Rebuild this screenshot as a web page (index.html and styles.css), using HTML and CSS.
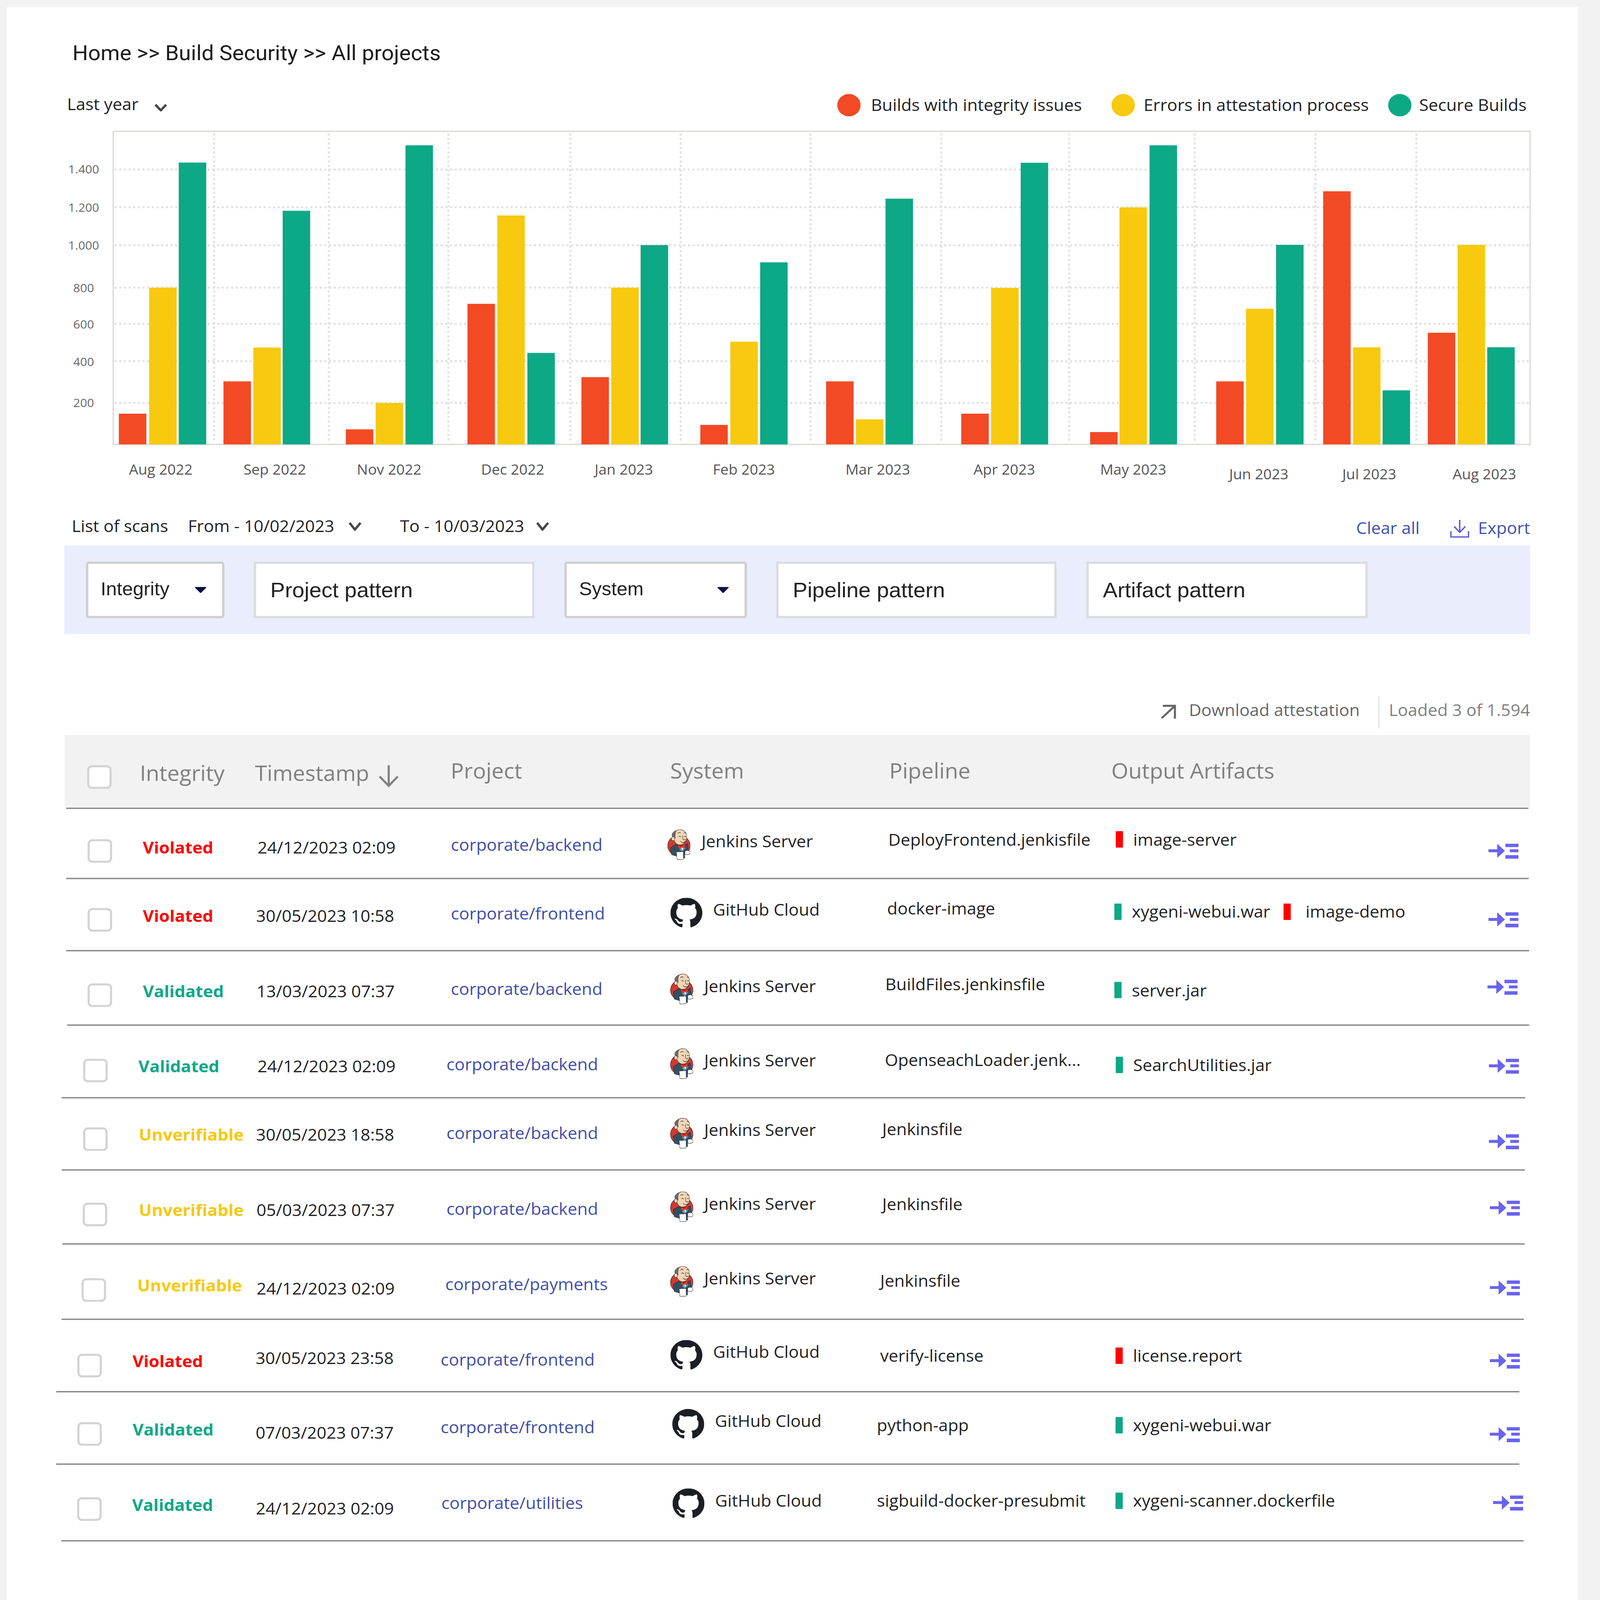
FILE: index.html
```html
<!DOCTYPE html>
<html lang="en">
<head>
<meta charset="utf-8">
<title>All projects</title>
<link rel="stylesheet" href="styles.css">
</head>
<body>
<svg class="defs" aria-hidden="true">
  <symbol id="jenkins" viewBox="0 0 296 305" preserveAspectRatio="none">
    <ellipse cx="148" cy="163" rx="145" ry="103" fill="#d33833" stroke="#231f20" stroke-width="5"/>
    <path d="M38 183 L108 150 L150 165 L225 160 L258 143 L268 208 L222 222 L223 288 L118 268 L53 253 Z" fill="#335061" stroke="#231f20" stroke-width="4"/>
    <path d="M153 198 L180 176 L236 184 L196 216 L195 230 Z" fill="#6d9fba"/>
    <path d="M178 182 L205 182 L196 212 Z" fill="#fff"/>
    <path d="M136 155 L176 170 L226 152 L222 186 L182 182 L142 190 Z" fill="#ef3b2c" stroke="#8a1c15" stroke-width="3"/>
    <path d="M70 70 C80 24 120 2 160 2 C210 2 245 30 248 70 C250 110 215 156 160 156 C115 156 85 130 70 70 Z" fill="#f0d6b5" stroke="#231f20" stroke-width="4"/>
    <path d="M58 50 C68 30 90 16 118 10 C100 28 96 60 103 88 L62 72 Z" fill="#6d6b6d" stroke="#231f20" stroke-width="3"/>
    <circle cx="73" cy="93" r="21" fill="#f0d6b5" stroke="#231f20" stroke-width="4"/>
    <path d="M146 72 Q160 62 176 78 M216 72 Q230 64 240 76 M200 60 Q190 95 208 104 Q225 108 232 96 M164 118 Q190 145 238 118 M132 40 Q148 24 170 36 M212 36 Q226 28 240 42" fill="none" stroke="#231f20" stroke-width="5"/>
    <path d="M115 226 L203 222 L206 300 L125 303 Z" fill="#fff" stroke="#231f20" stroke-width="4"/>
    <path d="M225 218 C250 205 290 208 293 232 C293 252 262 258 225 250 Z" fill="#fff" stroke="#231f20" stroke-width="4"/>
  </symbol>
  <symbol id="github" viewBox="0 0 16 16" preserveAspectRatio="none">
    <path fill="#1b1f23" d="M8 0C3.58 0 0 3.58 0 8c0 3.54 2.29 6.53 5.47 7.59.4.07.55-.17.55-.38 0-.19-.01-.82-.01-1.49-2.01.37-2.53-.49-2.69-.94-.09-.23-.48-.94-.82-1.13-.28-.15-.68-.52-.01-.53.63-.01 1.08.58 1.23.82.72 1.21 1.87.87 2.33.66.07-.52.28-.87.51-1.07-1.78-.2-3.64-.89-3.64-3.95 0-.87.31-1.59.82-2.15-.08-.2-.36-1.02.08-2.12 0 0 .67-.21 2.2.82.64-.18 1.32-.27 2-.27.68 0 1.36.09 2 .27 1.53-1.04 2.2-.82 2.2-.82.44 1.1.16 1.92.08 2.12.51.56.82 1.27.82 2.15 0 3.07-1.87 3.75-3.65 3.95.29.25.54.73.54 1.48 0 1.07-.01 1.93-.01 2.2 0 .21.15.46.55.38A8.013 8.013 0 0016 8c0-4.42-3.58-8-8-8z"/>
  </symbol>
  <symbol id="expand" viewBox="0 0 131 71">
    <path fill="#6a63ee" d="M0 29H38V4L71 36L38 67V42H0Z M73 4H129V19H73Z M92 29H129V42H92Z M73 55H129V71H73Z"/>
  </symbol>
</svg>

<main class="panel">
  <h1 class="crumb">Home &gt;&gt; Build Security &gt;&gt; All projects</h1>

  <section class="chart-top">
    <span class="period">Last year</span>
    <svg class="chev chev-period" viewBox="0 0 54 34"><path d="M4 4L27 29L50 4"/></svg>
    <ul class="legend">
      <li class="legend-item item-a"><i class="dot dot-r"></i>Builds with integrity issues</li>
      <li class="legend-item item-b"><i class="dot dot-y"></i>Errors in attestation process</li>
      <li class="legend-item item-c"><i class="dot dot-g"></i>Secure Builds</li>
    </ul>
  </section>

  <svg class="chart" viewBox="276 560 6300 1600" role="img" aria-label="Builds per month">
    <g class="grid">
      <path d="M496 756H6560M496 924H6560M496 1094H6560M496 1283H6560M496 1444H6560M496 1611H6560M496 1797H6560"/>
      <path d="M919 600V1975M1411 600V1975M1924 600V1975M2447 600V1975M2921 600V1975M3478 600V1975M4039 600V1975M4588 600V1975M5127 600V1975M5645 600V1975M6078 600V1975"/>
    </g>
    <path class="frame" d="M486 1982V586H6566V1982Z"/>
    <g class="bars-r">
      <rect x="510" y="1845" width="118" height="137"/><rect x="959" y="1701" width="118" height="281"/><rect x="1484" y="1915" width="118" height="67"/><rect x="2006" y="1355" width="118" height="627"/><rect x="2495" y="1682" width="118" height="300"/><rect x="3005" y="1895" width="118" height="87"/><rect x="3545" y="1701" width="118" height="281"/><rect x="4125" y="1845" width="118" height="137"/><rect x="4678" y="1927" width="118" height="55"/><rect x="5219" y="1701" width="118" height="281"/><rect x="5678" y="853" width="118" height="1129"/><rect x="6127" y="1484" width="118" height="498"/>
    </g>
    <g class="bars-y">
      <rect x="640" y="1283" width="118" height="699"/><rect x="1087" y="1550" width="118" height="432"/><rect x="1612" y="1797" width="118" height="185"/><rect x="2134" y="961" width="118" height="1021"/><rect x="2623" y="1283" width="118" height="699"/><rect x="3134" y="1524" width="118" height="458"/><rect x="3673" y="1870" width="118" height="112"/><rect x="4253" y="1284" width="118" height="698"/><rect x="4804" y="925" width="118" height="1057"/><rect x="5347" y="1377" width="118" height="605"/><rect x="5806" y="1549" width="118" height="433"/><rect x="6255" y="1092" width="118" height="890"/>
    </g>
    <g class="bars-g">
      <rect x="767" y="725" width="118" height="1257"/><rect x="1213" y="940" width="118" height="1042"/><rect x="1740" y="648" width="118" height="1334"/><rect x="2263" y="1574" width="118" height="408"/><rect x="2749" y="1093" width="118" height="889"/><rect x="3262" y="1170" width="118" height="812"/><rect x="3800" y="886" width="118" height="1096"/><rect x="4380" y="726" width="118" height="1256"/><rect x="4933" y="648" width="118" height="1334"/><rect x="5476" y="1092" width="118" height="890"/><rect x="5933" y="1741" width="118" height="241"/><rect x="6382" y="1549" width="118" height="433"/>
    </g>
    <g class="y-labels">
      <text x="359" y="774">1.400</text><text x="359" y="944">1.200</text><text x="359" y="1113">1.000</text><text x="359" y="1303">800</text><text x="359" y="1466">600</text><text x="359" y="1632">400</text><text x="359" y="1815">200</text>
    </g>
    <g class="x-labels">
      <text x="690" y="2116">Aug 2022</text><text x="1179" y="2116">Sep 2022</text><text x="1670" y="2116">Nov 2022</text><text x="2200" y="2116">Dec 2022</text><text x="2677" y="2116">Jan 2023</text><text x="3192" y="2116">Feb 2023</text><text x="3767" y="2116">Mar 2023</text><text x="4310" y="2116">Apr 2023</text><text x="4863" y="2116">May 2023</text><text x="5402" y="2137">Jun 2023</text><text x="5876" y="2137">Jul 2023</text><text x="6370" y="2137">Aug 2023</text>
    </g>
  </svg>

  <section class="list-bar">
    <span>List of scans</span>
    <span class="from">From - 10/02/2023</span>
    <svg class="chev chev-date chev-from" viewBox="0 0 57 39"><path d="M5 4L28 34L52 4"/></svg>
    <span class="to">To - 10/03/2023</span>
    <svg class="chev chev-date chev-to" viewBox="0 0 57 39"><path d="M5 4L28 34L52 4"/></svg>
    <a class="link clear">Clear all</a>
    <svg class="export-icon" viewBox="0 0 82 79"><path d="M41 0V55M17 29L41 55L65 29M3 50V76H79V50"/></svg>
    <a class="link export">Export</a>
  </section>

  <section class="filters">
    <div class="field select w-integrity">Integrity<svg class="caret" viewBox="0 0 52 30"><path d="M4 2H48Q52 2 49 6L29 27Q26 30 23 27L3 6Q0 2 4 2Z"/></svg></div>
    <div class="field input w-project">Project pattern</div>
    <div class="field select w-system">System<svg class="caret" viewBox="0 0 52 30"><path d="M4 2H48Q52 2 49 6L29 27Q26 30 23 27L3 6Q0 2 4 2Z"/></svg></div>
    <div class="field input w-pipeline">Pipeline pattern</div>
    <div class="field input w-artifact">Artifact pattern</div>
  </section>

  <section class="table-tools">
    <svg class="att-icon" viewBox="0 0 65 64"><path d="M8 5H60V62M58 7L3 60"/></svg>
    <span class="att-text">Download attestation</span>
    <i class="sep"></i>
    <span class="loaded">Loaded 3 of 1.594</span>
  </section>

  <section class="thead">
    <span class="cb cb-head"></span>
    <span class="th th-low">Integrity</span>
    <span class="th th-low th-time">Timestamp<svg class="sort" viewBox="0 0 86 98"><path d="M43 0V92M4 50L43 92L82 50"/></svg></span>
    <span class="th">Project</span>
    <span class="th">System</span>
    <span class="th">Pipeline</span>
    <span class="th">Output Artifacts</span>
  </section>
  <div class="thead-rule"></div>

  <article class="row r1">
    <i></i><span class="cb"></span><b class="status bad">Violated</b><span class="date">24/12/2023 02:09</span><a class="proj">corporate/backend</a>
    <div class="sys"><svg class="logo jk"><use href="#jenkins"/></svg><span class="sys-name">Jenkins Server</span></div>
    <span class="pipe">DeployFrontend.jenkisfile</span>
    <div class="arts"><div class="art"><i class="abar a-bad"></i><span class="atext">image-server</span></div></div>
    <svg class="expand"><use href="#expand"/></svg>
  </article>
  <article class="row r2">
    <i></i><span class="cb"></span><b class="status bad">Violated</b><span class="date">30/05/2023 10:58</span><a class="proj">corporate/frontend</a>
    <div class="sys"><svg class="logo gh"><use href="#github"/></svg><span class="sys-name">GitHub Cloud</span></div>
    <span class="pipe">docker-image</span>
    <div class="arts"><div class="art"><i class="abar a-ok"></i><span class="atext">xygeni-webui.war</span></div><div class="art art-wide"><i class="abar a-bad"></i><span class="atext">image-demo</span></div></div>
    <svg class="expand"><use href="#expand"/></svg>
  </article>
  <article class="row r3">
    <i></i><span class="cb"></span><b class="status ok">Validated</b><span class="date">13/03/2023 07:37</span><a class="proj">corporate/backend</a>
    <div class="sys"><svg class="logo jk"><use href="#jenkins"/></svg><span class="sys-name">Jenkins Server</span></div>
    <span class="pipe">BuildFiles.jenkinsfile</span>
    <div class="arts"><div class="art"><i class="abar a-ok"></i><span class="atext">server.jar</span></div></div>
    <svg class="expand"><use href="#expand"/></svg>
  </article>
  <article class="row r4">
    <i></i><span class="cb"></span><b class="status ok">Validated</b><span class="date">24/12/2023 02:09</span><a class="proj">corporate/backend</a>
    <div class="sys"><svg class="logo jk"><use href="#jenkins"/></svg><span class="sys-name">Jenkins Server</span></div>
    <span class="pipe">OpenseachLoader.jenk...</span>
    <div class="arts"><div class="art"><i class="abar a-ok"></i><span class="atext">SearchUtilities.jar</span></div></div>
    <svg class="expand"><use href="#expand"/></svg>
  </article>
  <article class="row r5">
    <i></i><span class="cb"></span><b class="status warn">Unverifiable</b><span class="date">30/05/2023 18:58</span><a class="proj">corporate/backend</a>
    <div class="sys"><svg class="logo jk"><use href="#jenkins"/></svg><span class="sys-name">Jenkins Server</span></div>
    <span class="pipe">Jenkinsfile</span>
    <div class="arts"></div>
    <svg class="expand"><use href="#expand"/></svg>
  </article>
  <article class="row r6">
    <i></i><span class="cb"></span><b class="status warn">Unverifiable</b><span class="date">05/03/2023 07:37</span><a class="proj">corporate/backend</a>
    <div class="sys"><svg class="logo jk"><use href="#jenkins"/></svg><span class="sys-name">Jenkins Server</span></div>
    <span class="pipe">Jenkinsfile</span>
    <div class="arts"></div>
    <svg class="expand"><use href="#expand"/></svg>
  </article>
  <article class="row r7">
    <i></i><span class="cb"></span><b class="status warn">Unverifiable</b><span class="date">24/12/2023 02:09</span><a class="proj">corporate/payments</a>
    <div class="sys"><svg class="logo jk"><use href="#jenkins"/></svg><span class="sys-name">Jenkins Server</span></div>
    <span class="pipe">Jenkinsfile</span>
    <div class="arts"></div>
    <svg class="expand"><use href="#expand"/></svg>
  </article>
  <article class="row r8">
    <i></i><span class="cb"></span><b class="status bad">Violated</b><span class="date">30/05/2023 23:58</span><a class="proj">corporate/frontend</a>
    <div class="sys"><svg class="logo gh"><use href="#github"/></svg><span class="sys-name">GitHub Cloud</span></div>
    <span class="pipe">verify-license</span>
    <div class="arts"><div class="art"><i class="abar a-bad"></i><span class="atext">license.report</span></div></div>
    <svg class="expand"><use href="#expand"/></svg>
  </article>
  <article class="row r9">
    <i></i><span class="cb"></span><b class="status ok">Validated</b><span class="date">07/03/2023 07:37</span><a class="proj">corporate/frontend</a>
    <div class="sys"><svg class="logo gh"><use href="#github"/></svg><span class="sys-name">GitHub Cloud</span></div>
    <span class="pipe">python-app</span>
    <div class="arts"><div class="art"><i class="abar a-ok"></i><span class="atext">xygeni-webui.war</span></div></div>
    <svg class="expand"><use href="#expand"/></svg>
  </article>
  <article class="row r10">
    <i></i><span class="cb"></span><b class="status ok">Validated</b><span class="date">24/12/2023 02:09</span><a class="proj">corporate/utilities</a>
    <div class="sys"><svg class="logo gh"><use href="#github"/></svg><span class="sys-name">GitHub Cloud</span></div>
    <span class="pipe">sigbuild-docker-presubmit</span>
    <div class="arts"><div class="art"><i class="abar a-ok"></i><span class="atext">xygeni-scanner.dockerfile</span></div></div>
    <svg class="expand"><use href="#expand"/></svg>
  </article>
</main>
<script src="fit.js"></script>
</body>
</html>
```
FILE: fit.js
```js
// The design is drawn at 6866x7136; fit it to whatever window it is opened in.
var root = document.documentElement;
root.style.setProperty('--sx', window.innerWidth / 6866);
root.style.setProperty('--sy', window.innerHeight / 7136);
```
FILE: styles.css
```css
* { box-sizing: border-box; }
html { overflow: hidden; background: #f2f2f2; }
html, body { margin: 0; padding: 0; }
body {
  width: 6866px;
  height: 7136px;
  background: #f2f2f2;
  font-family: "Open Sans", "Liberation Sans", sans-serif;
  font-size: 73px;
  line-height: 100px;
  color: #222;
  overflow: hidden;
  transform-origin: 0 0;
  transform: scale(var(--sx, 1), var(--sy, 1));
}
.defs { width: 0; height: 0; display: block; }
.panel {
  width: 6743px;
  height: 7104px;
  margin: 32px 0 0 29px;
  background: #fff;
  padding-top: 145px;
  overflow: hidden;
}

.crumb {
  margin: 0 0 0 282px;
  font-family: Roboto, "Liberation Sans", sans-serif;
  font-weight: 400;
  font-size: 94px;
  line-height: 120px;
  color: #1c1c1c;
}

/* chart header */
.chart-top {
  display: flex;
  align-items: flex-start;
  width: 6537px;
  height: 100px;
  margin-top: 117px;
  padding-left: 259px;
}
.chev { fill: none; stroke: #444; stroke-width: 10; }
.chev-period { width: 54px; height: 34px; margin: 49px 0 0 69px; }
.legend { display: flex; margin: 0 15px 0 auto; padding: 0; list-style: none; font-size: 73.4px; }
.legend-item { display: flex; align-items: flex-start; margin-top: 2px; }
.item-b { margin-left: 127px; }
.item-c { margin-left: 83px; }
.dot { width: 100px; height: 100px; border-radius: 50%; margin: 3px 45px 0 0; }
.item-c .dot { margin-right: 33px; }
.item-b .dot { margin-right: 38px; }
.dot-r { background: #f24a25; }
.dot-y { background: #f7c90f; }
.dot-g { background: #0da886; }

/* chart */
.chart { display: block; width: 6300px; height: 1600px; margin: 46px 0 0 247px; }
.grid path { fill: none; stroke: #e2e2e2; stroke-width: 10; stroke-linecap: round; stroke-dasharray: 0 20; }
.frame { fill: none; stroke: #e0e0dc; stroke-width: 7; }
.bars-r { fill: #f24a25; }
.bars-y { fill: #f7c90f; }
.bars-g { fill: #0da886; }
.y-labels text { font-size: 52px; fill: #666; text-anchor: middle; }
.x-labels text { font-size: 63px; fill: #555; text-anchor: middle; }

/* list bar */
.list-bar {
  display: flex;
  align-items: flex-start;
  width: 6537px;
  height: 100px;
  margin-top: 135px;
  padding-left: 279px;
}
.from { margin-left: 85px; }
.to { margin-left: 165px; }
.chev-date { width: 57px; height: 39px; margin-top: 33px; }
.chev-from { margin-left: 60px; }
.chev-to { margin-left: 50px; }
.link { color: #3f51b0; }
.clear { margin: 8px 0 0 auto; }
.export { margin-top: 8px; margin-left: 38px; }
.export-icon {
  width: 82px; height: 79px; margin: 24px 0 0 131px;
  fill: none; stroke: #5a5ad8; stroke-width: 6;
}

/* filters */
.filters {
  display: flex;
  width: 6290px;
  height: 395px;
  margin: 38px 0 0 247px;
  padding: 72px 0 0 93px;
  background: #e9edfc;
}
.field {
  display: flex;
  flex: none;
  align-items: center;
  justify-content: space-between;
  height: 252px;
  background: #fff;
  font-family: "Liberation Sans", Arial, sans-serif;
}
.select {
  border: 10px solid #cfcfcf;
  border-radius: 12px;
  font-size: 83px;
  padding: 0 66px 8px 53px;
  margin-right: 126px;
}
.input {
  border: 10px solid #d9dce1;
  font-size: 94px;
  padding-left: 61px;
  margin-right: 128px;
}
.w-integrity { width: 594px; }
.w-project { width: 1205px; }
.w-system { width: 783px; }
.w-pipeline { width: 1203px; }
.w-artifact { width: 1207px; }
.caret { width: 52px; height: 30px; fill: #0a0a3c; margin-top: 8px; }

/* tools */
.table-tools {
  display: flex;
  align-items: flex-start;
  justify-content: flex-end;
  width: 6537px;
  height: 100px;
  margin-top: 287px;
  color: #666;
}
.att-icon { width: 65px; height: 64px; margin: 28px 55px 0 0; fill: none; stroke: #666; stroke-width: 9; }
.sep { width: 4px; height: 142px; margin: -10px 41px 0 80px; background: #ddd; flex: none; }
.loaded { color: #808080; }

/* head */
.thead {
  display: grid;
  grid-template-columns: 323px 494px 840px 942px 940px 953px 1fr;
  align-items: start;
  width: 6289px;
  height: 323px;
  margin: 63px 0 0 248px;
  background: #f2f2f2;
  font-size: 94px;
  line-height: 130px;
  color: #808080;
}
.cb {
  display: block;
  width: 105px;
  height: 105px;
  border: 9px solid #d3d3d3;
  border-radius: 20px;
  background: #fff;
  margin-top: var(--yc);
}
.cb-head { margin: 135px 0 0 97px; }
.th { margin-top: 94px; }
.th-low { margin-top: 104px; }
.th-time { display: flex; align-items: flex-start; }
.sort { width: 86px; height: 98px; margin: 31px 0 0 41px; fill: none; stroke: #808080; stroke-width: 9; }
.thead-rule { width: 6275px; height: 6px; margin: 1px 0 0 255px; background: #888; }

/* rows */
.row {
  display: grid;
  grid-template-columns: var(--cols);
  align-items: start;
  width: var(--w);
  height: var(--h);
  margin-left: var(--ml);
  border-bottom: 6px solid #888;
}
.status { font-weight: 700; margin-top: var(--ys); }
.bad { color: #fe0000; }
.ok { color: #0da886; }
.warn { color: #f7c90f; }
.date { margin-top: var(--yd); white-space: nowrap; }
.proj { margin-top: var(--yp); color: #3f4ea8; white-space: nowrap; }
.sys { display: flex; align-items: flex-start; }
.logo { flex: none; margin-top: var(--yi); }
.jk { width: 99px; height: 136px; margin-right: 47px; }
.gh { width: 137px; height: 135px; margin-right: 46px; }
.sys-name { margin-top: var(--yt); white-space: nowrap; }
.pipe { margin-top: var(--yl); white-space: nowrap; }
.arts { display: flex; align-items: flex-start; }
.art { display: flex; align-items: flex-start; gap: 44px; }
.art-wide { margin-left: 57px; gap: 64px; }
.abar { display: block; flex: none; width: 31px; height: 73px; margin-top: var(--yb); }
.a-bad { background: #fe0000; }
.a-ok { background: #0da886; }
.atext { margin-top: var(--ya); white-space: nowrap; }
.expand { width: 131px; height: 71px; margin-top: var(--yx); }

.r1  { --ml: 255px; --w: 6276px; --h: 313px; --cols: 92px 237px 492px 830px 929px 948px 976px 1599px 1fr; --yc: 135px; --ys: 120px; --yd: 120px; --yp: 108px; --yi: 91px;  --yt: 93px;  --yl: 86px;  --yb: 99px;  --ya: 86px;  --yx: 151px; }
.r2  { --ml: 255px; --w: 6278px; --h: 322px; --cols: 92px 237px 486px 836px 942px 930px 975px 1605px 1fr; --yc: 129px; --ys: 112px; --yd: 112px; --yp: 102px; --yi: 83px;  --yt: 85px;  --yl: 79px;  --yb: 109px; --ya: 94px;  --yx: 144px; }
.r3  { --ml: 259px; --w: 6274px; --h: 332px; --cols: 88px 237px 488px 834px 941px 923px 983px 1601px 1fr; --yc: 143px; --ys: 126px; --yd: 126px; --yp: 117px; --yi: 100px; --yt: 104px; --yl: 95px;  --yb: 136px; --ya: 123px; --yx: 123px; }
.r4  { --ml: 236px; --w: 6280px; --h: 324px; --cols: 92px 237px 511px 811px 960px 921px 991px 1601px 1fr; --yc: 147px; --ys: 129px; --yd: 129px; --yp: 120px; --yi: 101px; --yt: 103px; --yl: 101px; --yb: 138px; --ya: 124px; --yx: 143px; }
.r5  { --ml: 236px; --w: 6278px; --h: 322px; --cols: 92px 239px 503px 817px 960px 910px 1002px 1601px 1fr; --yc: 129px; --ys: 111px; --yd: 111px; --yp: 103px; --yi: 87px;  --yt: 89px;  --yl: 86px;  --yb: 0px;   --ya: 0px;   --yx: 156px; }
.r6  { --ml: 239px; --w: 6275px; --h: 330px; --cols: 87px 241px 505px 815px 960px 910px 1002px 1605px 1fr; --yc: 143px; --ys: 125px; --yd: 125px; --yp: 119px; --yi: 93px;  --yt: 97px;  --yl: 99px;  --yb: 0px;   --ya: 0px;   --yx: 130px; }
.r7  { --ml: 235px; --w: 6275px; --h: 336px; --cols: 86px 239px 512px 810px 965px 901px 1011px 1605px 1fr; --yc: 150px; --ys: 131px; --yd: 145px; --yp: 126px; --yi: 96px;  --yt: 99px;  --yl: 109px; --yb: 0px;   --ya: 0px;   --yx: 156px; }
.r8  { --ml: 212px; --w: 6279px; --h: 323px; --cols: 91px 237px 528px 794px 986px 900px 1010px 1606px 1fr; --yc: 151px; --ys: 132px; --yd: 118px; --yp: 126px; --yi: 89px;  --yt: 91px;  --yl: 109px; --yb: 123px; --ya: 109px; --yx: 146px; }
.r9  { --ml: 212px; --w: 6279px; --h: 323px; --cols: 91px 237px 528px 794px 994px 878px 1024px 1606px 1fr; --yc: 133px; --ys: 114px; --yd: 128px; --yp: 104px; --yi: 74px;  --yt: 77px;  --yl: 96px;  --yb: 110px; --ya: 96px;  --yx: 151px; }
.r10 { --ml: 235px; --w: 6275px; --h: 342px; --cols: 67px 236px 531px 796px 992px 877px 1024px 1620px 1fr; --yc: 145px; --ys: 128px; --yd: 143px; --yp: 119px; --yi: 105px; --yt: 108px; --yl: 109px; --yb: 124px; --ya: 109px; --yx: 133px; }
```
